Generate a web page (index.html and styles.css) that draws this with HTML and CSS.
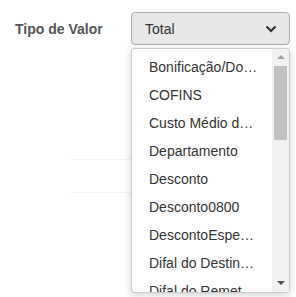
FILE: index.html
```html
<!DOCTYPE html>
<html lang="pt-BR">
<head>
    <meta charset="UTF-8">
    <meta name="viewport" content="width=device-width, initial-scale=1.0">
    <title>Tipo de Valor</title>
    <link rel="stylesheet" href="styles.css">
</head>
<body>
    <main class="form">
        <div class="form-row">
            <label class="form-label">Tipo de Valor</label>
            <div class="select-wrap">
                <div class="select-box">
                    <span>Total</span>
                    <svg class="chevron" width="12" height="8" viewBox="0 0 12 8">
                        <path d="M1.5 1.5 L6 6 L10.5 1.5" fill="none" stroke="#333" stroke-width="2.2"/>
                    </svg>
                </div>

                <!-- Dropdown list -->
                <div class="dropdown">
                    <ul class="options">
                        <li>Bonificação/Doação</li>
                        <li>COFINS</li>
                        <li>Custo Médio do Produto</li>
                        <li>Departamento</li>
                        <li>Desconto</li>
                        <li>Desconto0800</li>
                        <li>DescontoEspecial</li>
                        <li>Difal do Destinatário</li>
                        <li>Difal do Remetente</li>
                        <li>Frete</li>
                    </ul>
                    <div class="scrollbar">
                        <span class="arrow up"></span>
                        <span class="thumb"></span>
                        <span class="arrow down"></span>
                    </div>
                </div>
            </div>
        </div>

        <!-- fields behind the open list -->
        <div class="field field-a"></div>
        <div class="field field-b"></div>
    </main>
</body>
</html>
```

FILE: styles.css
```css
html, body {
    height: 100%;
}
body {
    margin: 0;
    background-color: #fff;
    font-family: Arial, "Liberation Sans", sans-serif;
    color: #333;
}
.form {
    box-sizing: border-box;
    min-height: 297px;
    padding: 12px 0 0 0;
}
.form-row {
    display: flex;
    align-items: flex-start;
}
.form-label {
    width: 116px;
    padding-left: 15px;
    font-size: 14px;
    font-weight: bold;
    color: #555;
    line-height: 34px;
}
.select-wrap {
    position: relative;
}
.select-box {
    box-sizing: border-box;
    width: 159px;
    height: 33px;
    border: 1px solid #adadad;
    border-radius: 4px;
    background-color: #e8e8e8;
    display: flex;
    align-items: center;
    justify-content: space-between;
    padding: 0 12px 0 13px;
    font-size: 14px;
    color: #333;
}
.chevron {
    display: block;
}
.dropdown {
    position: absolute;
    top: 36px;
    left: 0;
    width: 159px;
    height: 245px;
    box-sizing: border-box;
    background-color: #fff;
    border: 1px solid #ccc;
    border-radius: 3px;
    box-shadow: 0 2px 8px rgba(0, 0, 0, 0.18);
    overflow: hidden;
    display: flex;
    z-index: 2;
}
.options {
    list-style: none;
    margin: 0;
    padding: 4px 0 0 0;
    flex: 1;
    min-width: 0;
}
.options li {
    height: 28px;
    line-height: 28px;
    padding: 0 14px 0 17px;
    font-size: 14px;
    color: #333;
    white-space: nowrap;
    overflow: hidden;
    text-overflow: ellipsis;
}
.scrollbar {
    width: 17px;
    background-color: #f1f1f1;
    display: flex;
    flex-direction: column;
    align-items: center;
}
.thumb {
    width: 13px;
    height: 74px;
    background-color: #c1c1c1;
    margin-top: 2px;
}
.arrow {
    width: 0;
    height: 0;
    border-left: 4px solid transparent;
    border-right: 4px solid transparent;
}
.arrow.up {
    margin-top: 6px;
    border-bottom: 4px solid #a3a3a3;
    margin-bottom: 5px;
}
.arrow.down {
    margin-top: auto;
    margin-bottom: 7px;
    border-top: 4px solid #505050;
}
.field {
    margin-left: 70px;
    width: 61px;
    border-right: 1px solid #ececec;
    border-bottom: 1px solid #f3f3f3;
}
.field-a {
    margin-top: 73px;
    height: 40px;
}
.field-b {
    height: 32px;
}
```
